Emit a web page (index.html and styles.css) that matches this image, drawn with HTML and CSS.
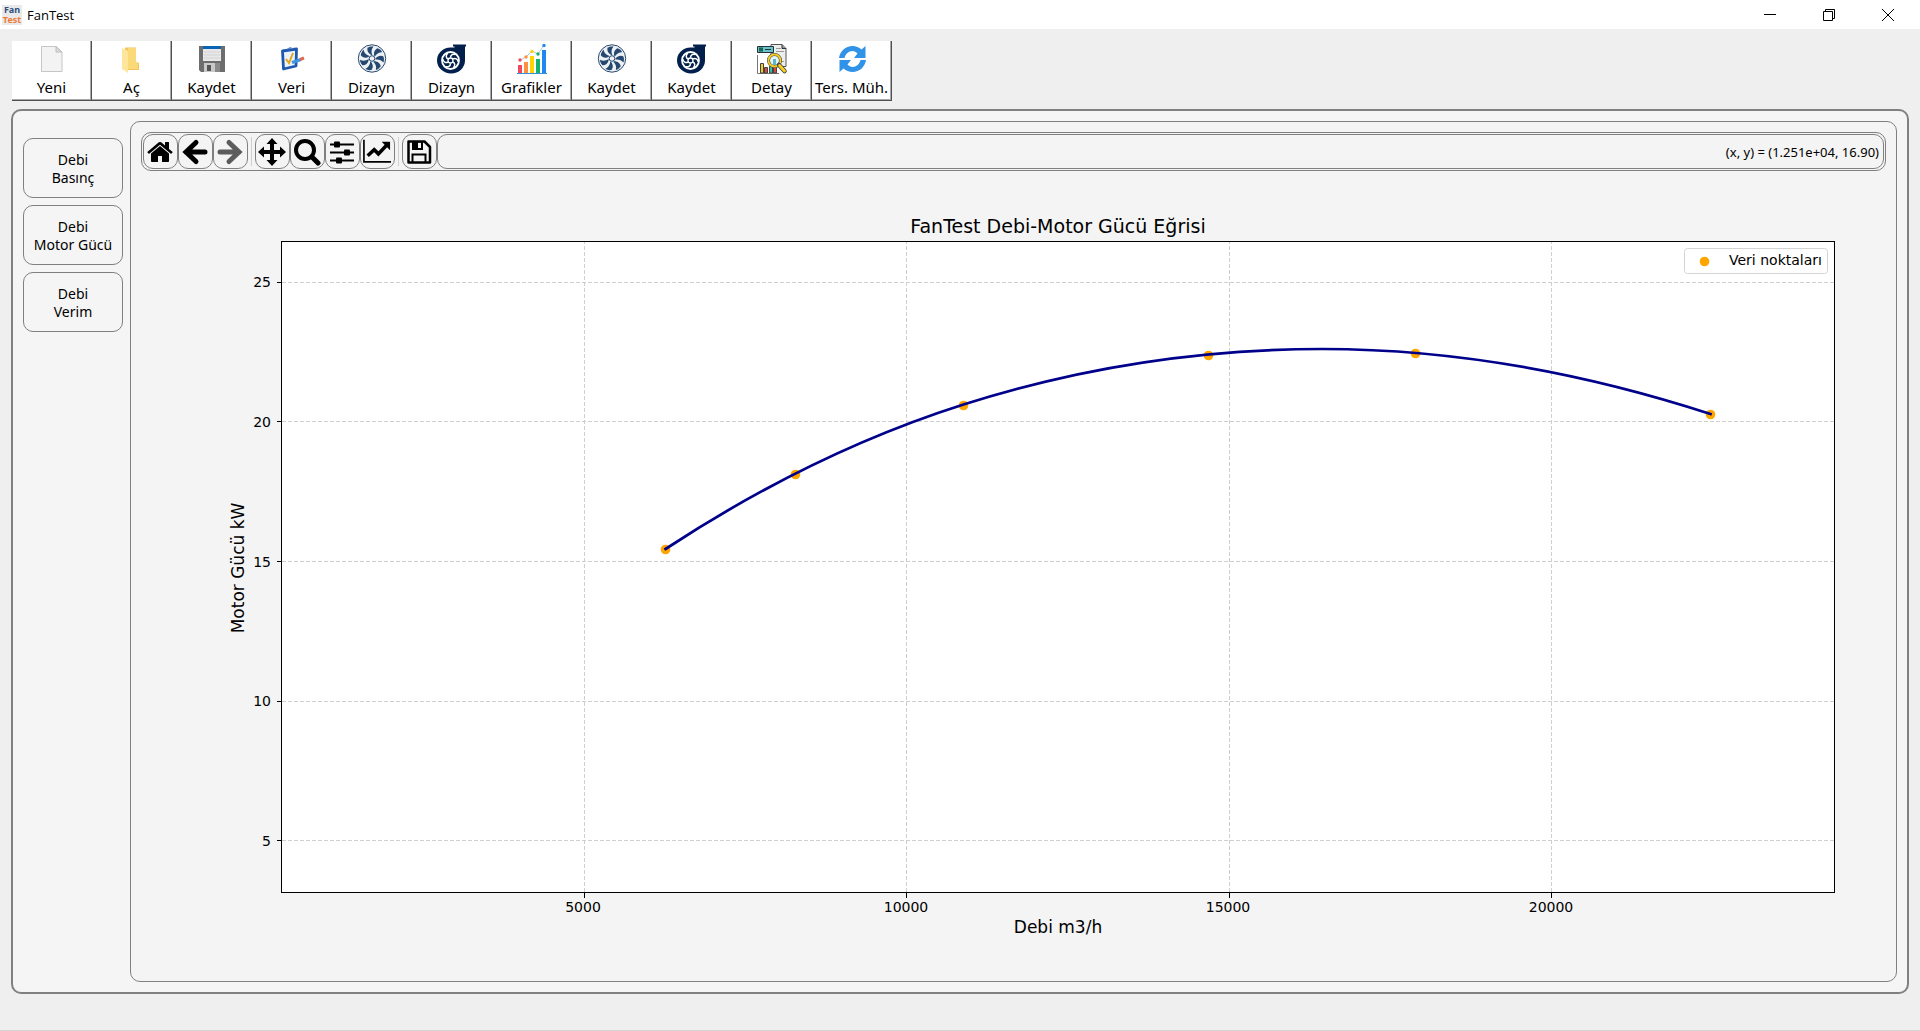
FILE: index.html
```html
<!DOCTYPE html>
<html lang="tr">
<head>
    <meta charset="UTF-8">
    <meta name="viewport" content="width=device-width, initial-scale=1.0">
    <title>FanTest</title>
    <link rel="stylesheet" href="styles.css">
</head>
<body>
    <!-- shared icons -->
    <svg class="sprites" aria-hidden="true">
        <symbol id="fan" viewBox="0 0 32 32">
            <circle cx="16" cy="15.5" r="13.7" fill="#edf0f4" stroke="#2b4a6f" stroke-width="1"/>
            <g fill="#24486f">
                <path id="blade" d="M15.300 12C12 10.500 10.800 7.500 11.500 4.800C13.500 3.500 15.500 3.200 17.500 3.500C15.300 6 15 9 16.300 12Z"/>
                <use href="#blade" transform="rotate(51.4 16 15.5)"/>
                <use href="#blade" transform="rotate(102.8 16 15.5)"/>
                <use href="#blade" transform="rotate(154.3 16 15.5)"/>
                <use href="#blade" transform="rotate(205.7 16 15.5)"/>
                <use href="#blade" transform="rotate(257.1 16 15.5)"/>
                <use href="#blade" transform="rotate(308.6 16 15.5)"/>
            </g>
            <circle cx="16" cy="15.5" r="2.8" fill="#edf0f4" stroke="#24486f" stroke-width="1"/>
        </symbol>
        <symbol id="turbo" viewBox="0 0 32 32">
            <path d="M17 1.500H30V3.500H29V17.500A14 13 0 1 1 14.500 4.500H18.500V3.500H17Z" fill="#02204b"/>
            <circle cx="14.500" cy="17.500" r="8.500" fill="#02204b" stroke="#fff" stroke-width="1.800"/>
            <g fill="none" stroke="#fff" stroke-width="1.500">
                <path id="vane" d="M14.500 14.500C14.500 12 17 10.500 19.500 11.500"/>
                <use href="#vane" transform="rotate(60 14.5 17.5)"/>
                <use href="#vane" transform="rotate(120 14.5 17.5)"/>
                <use href="#vane" transform="rotate(180 14.5 17.5)"/>
                <use href="#vane" transform="rotate(240 14.5 17.5)"/>
                <use href="#vane" transform="rotate(300 14.5 17.5)"/>
            </g>
            <circle cx="14.500" cy="17.500" r="2.500" fill="#02204b" stroke="#fff" stroke-width="1.300"/>
        </symbol>
    </svg>

    <header class="titlebar">
        <span class="logo"><span class="logo-fan">Fan</span><span class="logo-test">Test</span></span>
        <h1>FanTest</h1>
        <div class="window-btns">
            <button aria-label="Simge durumuna küçült">
                <svg viewBox="0 0 12 12"><path d="M0 5.500H12"/></svg>
            </button>
            <button aria-label="Önceki boyut">
                <svg viewBox="0 0 12 12"><path d="M.5 2.500H9.500V11.500H.5ZM2.500 2.500V.5H11.500V9.500H9.500"/></svg>
            </button>
            <button aria-label="Kapat">
                <svg viewBox="0 0 12 12"><path d="M0 0L12 12M12 0L0 12"/></svg>
            </button>
        </div>
    </header>

    <nav class="menu">
        <button class="menu-btn">
            <svg viewBox="0 0 32 32">
                <path d="M5.500 3.500H20L26 9V28.500H5.500Z" fill="#f3f3f3" stroke="#c6c6c6"/>
                <path d="M20 3.500V9H26Z" fill="#dadada" stroke="#bdbdbd"/>
            </svg>
            Yeni
        </button>
        <button class="menu-btn">
            <svg viewBox="0 0 32 32">
                <path d="M9 4.500H20V19L23 20V27H9Z" fill="#f0c65c"/>
                <path d="M6 5L12 8V30L6 26Z" fill="#ffe69c"/>
                <path d="M12 5H20V19L22 20V26H12Z" fill="#fad978"/>
            </svg>
            Aç
        </button>
        <button class="menu-btn">
            <svg viewBox="0 0 32 32">
                <path d="M3 3H29V29H5L3 27Z" fill="#6d6d6d"/>
                <path d="M7 3H25V18H7Z" fill="#e8e8e8"/>
                <path d="M7 3H25V6H7Z" fill="#0a63b5"/>
                <path d="M8 9H24M8 12H24M8 15H24" stroke="#cfd3d6"/>
                <path d="M8 20H24V29H8Z" fill="#c9c9c9"/>
                <path d="M11 22H15V28H11Z" fill="#555"/>
                <path d="M19 20H24V29H19Z" fill="#8a8a8a"/>
            </svg>
            Kaydet
        </button>
        <button class="menu-btn">
            <svg viewBox="0 0 32 32">
                <path d="M6.500 8L20.500 6L20 23L7.500 26Z" fill="#eaf2ff" stroke="#1d57b0" stroke-width="2.800" stroke-linejoin="round"/>
                <path d="M10 6.500L14 4L18 5.500Z" fill="#5f87c4"/>
                <path d="M10 16L13 20L17 10" fill="none" stroke="#e3a512" stroke-width="2"/>
                <path d="M16 19.500L25 16.500" stroke="#3f93e0" stroke-width="3"/>
                <path d="M24 16.500L28 15" stroke="#e0684f" stroke-width="3"/>
            </svg>
            Veri
        </button>
        <button class="menu-btn">
            <svg><use href="#fan"/></svg>
            Dizayn
        </button>
        <button class="menu-btn">
            <svg><use href="#turbo"/></svg>
            Dizayn
        </button>
        <button class="menu-btn">
            <svg viewBox="0 0 32 32">
                <path d="M2 22H6V30H2Z" fill="#f2495c"/>
                <path d="M8 19H12V30H8Z" fill="#ff9040"/>
                <path d="M14 13H18V30H14Z" fill="#ffd400"/>
                <path d="M20 16H24V30H20Z" fill="#14b36b"/>
                <path d="M26 7H30V30H26Z" fill="#1e88f0"/>
                <path d="M1 30.500H31" stroke="#3a8fd8"/>
                <path d="M4 17L10 14L16 8L22 11L28 2" fill="none" stroke="#a9c8e4"/>
                <circle cx="4" cy="17" r="1.700" fill="#f2495c"/>
                <circle cx="10" cy="14" r="1.700" fill="#ff9040"/>
                <circle cx="16" cy="8.500" r="1.700" fill="#ffd400"/>
                <circle cx="22" cy="11" r="1.700" fill="#14b36b"/>
                <circle cx="28" cy="2.500" r="1.700" fill="#1e88f0"/>
            </svg>
            Grafikler
        </button>
        <button class="menu-btn">
            <svg><use href="#fan"/></svg>
            Kaydet
        </button>
        <button class="menu-btn">
            <svg><use href="#turbo"/></svg>
            Kaydet
        </button>
        <button class="menu-btn">
            <svg viewBox="0 0 32 32">
                <path d="M15 1.500H26L30 5.500V23.500H15Z" fill="#eceded" stroke="#555"/>
                <path d="M26 1.500V5.500H30" fill="#999" stroke="#333"/>
                <path d="M20 5.500H25M20 8.500H28M21 18.500H28" stroke="#999"/>
                <path d="M1.500 3.500H17.500V9.500H1.500Z" fill="#67c3cc" stroke="#273238"/>
                <path d="M3 4.500H7V8.500H3Z" fill="#18664d"/>
                <path d="M9 6.500H15" stroke="#273238"/>
                <path d="M1.500 12V30.500H23" fill="none" stroke="#777"/>
                <path d="M4.500 20.500H7.500V30H4.500Z" fill="#f5c928" stroke="#444"/>
                <path d="M8.500 24.500H11.500V30H8.500Z" fill="#e0483e" stroke="#444"/>
                <path d="M13.500 23.500H16.500V30H13.500Z" fill="#35bfa4" stroke="#444"/>
                <path d="M17.500 20.500H20.500V30H17.500Z" fill="#e0483e" stroke="#444"/>
                <circle cx="18.500" cy="17.500" r="6" fill="#e3f3f7" stroke="#444" stroke-width="3"/>
                <circle cx="18.500" cy="17.500" r="6" fill="none" stroke="#f5d020" stroke-width="1.800"/>
                <path d="M17 16H20V22H17Z" fill="#5db6c9"/>
                <path d="M23 22L28.500 28" stroke="#444" stroke-width="4.500" stroke-linecap="round"/>
                <path d="M23.500 22.500L28.500 28" stroke="#f5d020" stroke-width="2.800" stroke-linecap="round"/>
            </svg>
            Detay
        </button>
        <button class="menu-btn">
            <svg viewBox="0 0 32 32">
                <g fill="#3093e8">
                    <path id="swirl" d="M3 15C4 8 9.500 3 16.500 3C20 3 23 4.500 25.500 6.500L29.500 3V15H18L21.500 10.500C20 9 18.500 8 16.500 8C12.500 8 9.500 11 8.500 15Z"/>
                    <use href="#swirl" transform="rotate(180 16.5 16)"/>
                </g>
            </svg>
            Ters. Müh.
        </button>
    </nav>

    <main class="workspace">
        <aside class="charts">
            <button class="chart-btn">Debi<br>Basınç</button>
            <button class="chart-btn">Debi<br>Motor Gücü</button>
            <button class="chart-btn">Debi<br>Verim</button>
        </aside>

        <section class="panel">
            <div class="toolbar">
                <button class="tool" aria-label="Home">
                    <svg viewBox="0 0 1792 1792"><path d="M1472 992v480q0 26-19 45t-45 19h-384v-384h-256v384h-384q-26 0-45-19t-19-45v-480q0-1 .5-3t.5-3l575-474 575 474q1 2 1 6zm223-69l-62 74q-8 9-21 11h-3q-13 0-21-7l-692-577-692 577q-12 8-24 7-13-2-21-11l-62-74q-8-10-7-23.500t11-21.500l719-599q32-26 76-26t76 26l244 204v-195q0-14 9-23t23-9h192q14 0 23 9t9 23v408l219 182q10 8 11 21.500t-7 23.500z"/></svg>
                </button>
                <button class="tool" aria-label="Back">
                    <svg viewBox="0 0 28 28"><path class="line" d="M15 4.500L5 14L15 23.500M5 14H24"/></svg>
                </button>
                <button class="tool" aria-label="Forward" disabled>
                    <svg viewBox="0 0 28 28"><path class="line" d="M13 4.500L23 14L13 23.500M23 14H4"/></svg>
                </button>
                <span class="sep"></span>
                <button class="tool" aria-label="Pan">
                    <svg viewBox="0 0 28 28">
                        <path d="M14 0L19.500 6H16V12H22V8.500L28 14L22 19.500V16H16V22H19.500L14 28L8.500 22H12V16H6V19.500L0 14L6 8.500V12H12V6H8.500Z"/>
                    </svg>
                </button>
                <button class="tool" aria-label="Zoom">
                    <svg viewBox="0 0 28 28">
                        <circle cx="12" cy="12" r="9" fill="none" stroke="#000" stroke-width="4"/>
                        <path class="line" d="M19 19L25 25"/>
                    </svg>
                </button>
                <button class="tool" aria-label="Subplots">
                    <svg viewBox="0 0 28 28">
                        <path d="M2 6.500H26M2 14.500H26M2 22.500H26" stroke="#000" stroke-width="1.800"/>
                        <rect x="6" y="3.500" width="6" height="6" rx="1"/>
                        <rect x="16" y="11.500" width="6" height="6" rx="1"/>
                        <rect x="8" y="19.500" width="6" height="6" rx="1"/>
                    </svg>
                </button>
                <button class="tool" aria-label="Customize">
                    <svg viewBox="0 0 30 28">
                        <path d="M1 1V24.500H30" fill="none" stroke="#000" stroke-width="1.800"/>
                        <path d="M5 18L12 11.500L16.500 16L26 6" fill="none" stroke="#000" stroke-width="3.800"/>
                        <path d="M20 3H29V12Z"/>
                    </svg>
                </button>
                <span class="sep"></span>
                <button class="tool" aria-label="Save">
                    <svg viewBox="0 0 28 28">
                        <path d="M3.500 3.500H19.500L25 9V24.500H3.500Z" fill="none" stroke="#000" stroke-width="2.500" stroke-linejoin="round"/>
                        <path d="M7 3H18V12H7ZM13 4.500V10H16V4.500Z" fill-rule="evenodd"/>
                        <path d="M7.500 24V16.500H20.500V24" fill="none" stroke="#000" stroke-width="2"/>
                    </svg>
                </button>
                <output class="coords">(x, y) = (1.251e+04, 16.90)</output>
            </div>

            <svg class="figure" viewBox="0 0 1745 800" role="img" aria-label="FanTest Debi-Motor Gücü Eğrisi">
                <text class="fig-title" x="917" y="62">FanTest Debi-Motor Gücü Eğrisi</text>
                <rect x="140.5" y="70.5" width="1553" height="651" fill="#fff"/>

                <path class="grid" d="M443.5 721V71M765.5 721V71M1088.5 721V71M1410.5 721V71"/>
                <path class="grid" d="M141 669.5H1693M141 530.5H1693M141 390.5H1693M141 250.5H1693M141 111.5H1693"/>

                <g class="points">
                    <circle cx="524.5" cy="378.5" r="4.8"/>
                    <circle cx="654.5" cy="303.5" r="4.8"/>
                    <circle cx="822.5" cy="234.5" r="4.8"/>
                    <circle cx="1067.5" cy="184.500" r="4.8"/>
                    <circle cx="1274.500" cy="182.500" r="4.8"/>
                    <circle cx="1569.500" cy="243.500" r="4.8"/>
                </g>
                <path class="curve" d="M524.500 378C623.500 313 723.500 265 822.500 233.500C942 195.500 1061 178 1181 178C1310 178 1440 201 1569.500 243"/>

                <rect class="frame" x="140.5" y="70.5" width="1553" height="651"/>
                <path class="ticks" d="M443.5 722V727M765.5 722V727M1088.5 722V727M1410.5 722V727"/>
                <path class="ticks" d="M136 669.5H140M136 530.5H140M136 390.5H140M136 250.5H140M136 111.5H140"/>

                <g class="x-labels">
                    <text x="442" y="741">5000</text>
                    <text x="765" y="741">10000</text>
                    <text x="1087" y="741">15000</text>
                    <text x="1410" y="741">20000</text>
                    <text class="axis-name" x="917" y="762">Debi m3/h</text>
                </g>
                <g class="y-labels">
                    <text x="130" y="675">5</text>
                    <text x="130" y="535">10</text>
                    <text x="130" y="396">15</text>
                    <text x="130" y="256">20</text>
                    <text x="130" y="116">25</text>
                </g>
                <text class="axis-name" transform="translate(103 397) rotate(-90)">Motor Gücü kW</text>

                <rect class="legend" x="1543.5" y="77.5" width="143" height="25" rx="3"/>
                <circle cx="1563.5" cy="90.5" r="4.8" fill="#ffa500"/>
                <text class="legend-text" x="1588" y="94">Veri noktaları</text>
            </svg>
        </section>
    </main>

    <footer class="bottom-edge"></footer>
</body>
</html>
```
FILE: styles.css
```css
* {
    box-sizing: border-box;
}
body {
    margin: 0;
    min-height: 100vh;
    display: flex;
    flex-direction: column;
    background-color: #efefef;
    color: #000;
    font-family: "Noto Sans", sans-serif;
    font-size: 14px;
}
button {
    margin: 0;
    padding: 0;
    font: inherit;
    color: inherit;
    background: none;
    border: none;
}
.sprites {
    position: absolute;
    width: 0;
    height: 0;
}

/* window title bar */
.titlebar {
    display: flex;
    align-items: center;
    height: 29px;
    padding-left: 2px;
    background-color: #fff;
}
.titlebar h1 {
    margin: 0 auto 0 5px;
    font-family: "Open Sans", sans-serif;
    font-size: 13px;
    font-weight: normal;
}
.logo {
    display: flex;
    flex-direction: column;
    width: 20px;
    height: 20px;
    background-color: #e9e9e9;
    font-size: 9px;
    font-weight: bold;
    line-height: 10px;
    text-align: center;
}
.logo-fan {
    color: #2d4f7c;
}
.logo-test {
    color: #f0793a;
}
.window-btns {
    display: flex;
}
.window-btns button {
    display: flex;
    align-items: center;
    justify-content: center;
    width: 59px;
    height: 28px;
}
.window-btns button:last-child {
    margin-right: 3px;
}
.window-btns svg {
    width: 12px;
    height: 12px;
    fill: none;
    stroke: #000;
}

/* main menu buttons */
.menu {
    display: flex;
    margin: 12px 12px 8px;
}
.menu-btn {
    display: flex;
    flex-direction: column;
    align-items: center;
    width: 80px;
    height: 60px;
    padding-top: 2px;
    background-color: #fff;
    border-right: 1px solid #505050;
    border-bottom: 1px solid #505050;
    box-shadow: inset -1px -1px #a8a8a8;
    font-size: 15px;
    line-height: 24px;
    white-space: nowrap;
}
.menu-btn svg {
    flex: none;
    width: 32px;
    height: 32px;
}

/* work area */
.workspace {
    flex: 1;
    display: flex;
    gap: 7px;
    margin: 0 11px 36px;
    padding: 10px;
    background-color: #f5f5f5;
    border: 2px solid #808080;
    border-radius: 10px;
}
.charts {
    display: flex;
    flex-direction: column;
    gap: 7px;
    width: 100px;
    padding-top: 17px;
}
.chart-btn {
    height: 60px;
    padding-top: 1px;
    border: 1px solid #808080;
    border-radius: 10px;
    line-height: 18px;
}
.panel {
    flex: 1;
    min-width: 0;
    display: flex;
    flex-direction: column;
    padding: 10px;
    background-color: #f4f4f4;
    border: 1px solid #808080;
    border-radius: 10px;
}

/* plot toolbar */
.toolbar {
    display: flex;
    height: 39px;
    padding: 1px;
    border: 1px solid #808080;
    border-radius: 10px;
}
.tool {
    display: flex;
    align-items: center;
    justify-content: center;
    flex: none;
    width: 35px;
    padding-right: 1px;
    border: 1px solid #808080;
    border-radius: 10px;
}
.tool svg {
    width: 28px;
    height: 28px;
}
.tool .line {
    fill: none;
    stroke: #000;
    stroke-width: 5;
    stroke-linecap: round;
}
.tool:disabled .line {
    stroke: #5c5c5c;
}
.sep {
    flex: none;
    width: 1px;
    margin: 3px;
    background-color: #d0d0d0;
}
.coords {
    flex: 1;
    padding-right: 4px;
    border: 1px solid #808080;
    border-radius: 10px;
    font-size: 13px;
    line-height: 35px;
    text-align: right;
}

/* chart */
.figure {
    display: block;
    width: 100%;
    height: auto;
    font-family: "DejaVu Sans", sans-serif;
    font-size: 14px;
}
.fig-title {
    font-size: 19px;
    text-anchor: middle;
}
.axis-name {
    font-size: 17px;
    text-anchor: middle;
}
.x-labels {
    text-anchor: middle;
}
.y-labels {
    text-anchor: end;
}
.grid {
    fill: none;
    stroke: #cfcfcf;
    stroke-dasharray: 4 2;
}
.frame {
    fill: none;
    stroke: #000;
}
.ticks {
    stroke: #000;
}
.points {
    fill: #ffa500;
}
.curve {
    fill: none;
    stroke: #00008b;
    stroke-width: 2.7;
    stroke-linecap: square;
}
.legend {
    fill: #fff;
    stroke: #d4d4d4;
}

.bottom-edge {
    height: 1px;
    background-color: #d5d5d5;
}
```
